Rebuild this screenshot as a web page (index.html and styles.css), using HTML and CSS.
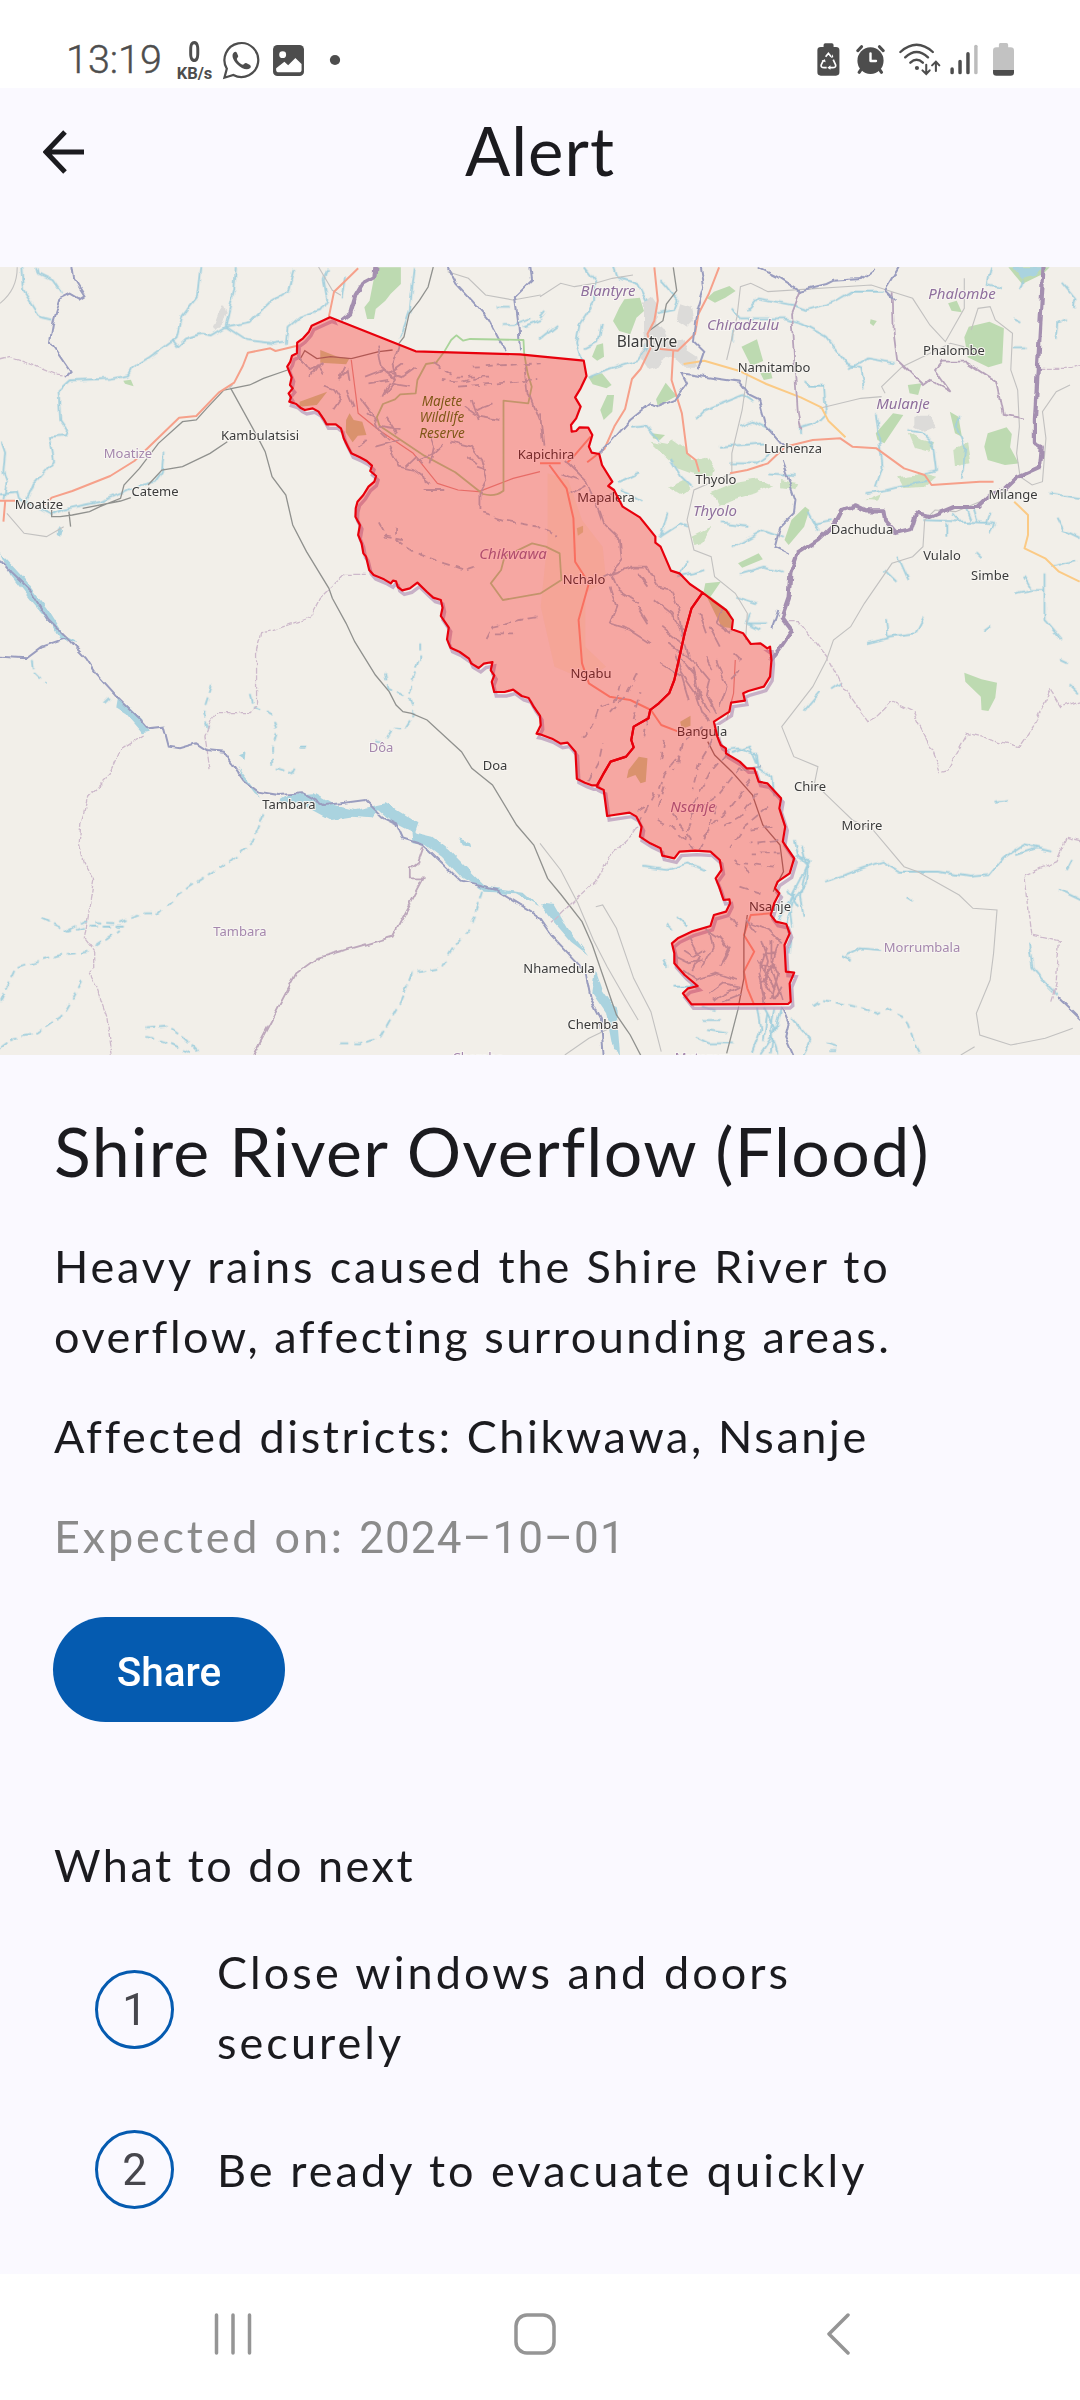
FILE: index.html
```html
<!DOCTYPE html>
<html lang="en">
<head>
<meta charset="utf-8">
<title>Alert</title>
<link rel="stylesheet" href="styles.css">
</head>
<body>
<div class="screen">
  <div class="status">
    <span class="time">13:19</span>
    <span class="speed"><b>0</b><small>KB/s</small></span>
    <svg class="whatsapp" viewBox="645 120 112 120" preserveAspectRatio="none"><path d="M652 233l7-27a49 51 0 1 1 19 19z" fill="none" stroke="#4d4d4d" stroke-width="6.5"/><path d="M680 157c-8 6-5 22 8 35 14 14 29 20 38 13 4-4 3-9-1-11l-10-5c-4-1-6 4-9 5-7-1-17-11-18-17 0-3 5-6 4-9l-4-10c-2-4-6-3-8-1z" fill="#4d4d4d"/></svg>
    <svg class="photo" viewBox="790 120 96 120" preserveAspectRatio="none"><rect x="793" y="135" width="90" height="93" rx="13" fill="#4d4d4d"/><circle cx="821" cy="164" r="10" fill="#fff"/><path d="M802 205l24-20 11 11 21-22 18 18v17q0 8-8 8h-58q-8 0-8-8z" fill="#fff"/></svg>
    <svg class="more" viewBox="955 120 35 120" preserveAspectRatio="none"><circle cx="972.500" cy="180" r="15" fill="#4d4d4d"/></svg>
    <span class="grow"></span>
    <svg class="recycle" viewBox="800 120 72 120" preserveAspectRatio="none"><path d="M822 141v-6q0-5 5-5h19q5 0 5 5v6h7q10 0 10 10v66q0 10-10 10h-44q-10 0-10-10v-66q0-10 10-10z" fill="#4d4d4d"/><path d="M828 170l8-10 8 10M850 179l7 16q2 8-9 8h-8M831 203h-7q-11 0-9-8l6-13" fill="none" stroke="#fff" stroke-width="5"/><path d="M843 174l7-2-1-9zM842 196v13l-9-6zM816 182l10-4 2 9z" fill="#fff"/></svg>
    <svg class="alarm" viewBox="915 120 90 120" preserveAspectRatio="none"><path d="M923 152l11-12M986 140l11 12M933 208l-6 9M986 208l6 9" stroke="#4d4d4d" stroke-width="9" stroke-linecap="round"/><ellipse cx="960" cy="182" rx="38" ry="40" fill="#4d4d4d"/><path d="M960 160v23h16" fill="none" stroke="#fff" stroke-width="7" stroke-linecap="round" stroke-linejoin="round"/></svg>
    <svg class="wifi" viewBox="1040 120 128 120" preserveAspectRatio="none"><g fill="none" stroke="#4d4d4d" stroke-width="7" stroke-linecap="round"><path d="M1047 156q47-43 94 0M1061 172q33-32 66 0M1076 188q18-17 36 0"/><path stroke-width="6" d="M1122 194v27m-11-10l11 11 10-11M1150 213v-27m-11 10l11-11 10 11"/></g><circle cx="1095" cy="204" r="6" fill="#4d4d4d"/></svg>
    <svg class="signal" viewBox="1188 120 87 120" preserveAspectRatio="none"><g stroke="#4d4d4d" stroke-width="10" stroke-linecap="round"><path d="M1197 207v11M1220 184v34M1243 161v57"/><path stroke="#bcbcbc" d="M1266 139v79"/></g></svg>
    <svg class="battery" viewBox="1312 120 66 120" preserveAspectRatio="none"><path d="M1332 142v-8q0-5 4-5h18q5 0 5 5v8h7q10 0 10 10v58h-61v-58q0-10 10-10z" fill="#c2c2c2"/><path d="M1315 210h61v8q0 9-10 9h-41q-10 0-10-9z" fill="#4d4d4d"/></svg>
  </div>

  <header class="appbar">
    <svg class="back" viewBox="0 0 42 44"><path d="M41 22H3M22 2L3 22l19 20" fill="none" stroke="#1b1b1f" stroke-width="5"/></svg>
    <h1>Alert</h1>
  </header>

  <svg class="map" viewBox="0 7 1080 788">
    <defs>
      <filter id="wiggle" x="-5%" y="-5%" width="110%" height="110%"><feTurbulence type="fractalNoise" baseFrequency=".035" numOctaves="1" seed="4"/><feDisplacementMap in="SourceGraphic" scale="20" xChannelSelector="R" yChannelSelector="G"/></filter>
      <clipPath id="frontier"><path d="M790 150h170l190 410v340l250 50 300 450 45 190 255-90 60-250 140-80h200v1130H790z"/></clipPath>
      <path id="chikwawa" d="M958 172l-23 11-30 14-8 18-17 20-17 13-1 32-14 7-5 18-9 15 8 20 5 12-5 23 8 10-12 15 7 12-5 13 20 7 12 11 13 7 23-5 17 10 15 23 8 15h27l15 12 8 30 12 25 10 20 25 12 20 11 15 14-5 16 17 15-5 17-17 15-15 25-17 20-5 20-1 25 13 25-5 30 10 25 5 30 8 10 9 40 13 15 30 13 20 12 6-8 9 2 5 17 13 10 22-6 22-17 28 28 18 17 22 7 5 23-5 25 23 35-5 35 10 25 27 13 27 20 6 14 22 14 15-13 25-5-5 25 10 15-7 20 7 30h30l25-7 25 19 20 6 15 27 18 27 2 28-12 25 10 2 35 13 25 15 20-3 23 28 4 80 23 12 20 8h15L1753 1540l20-35 45-15 22-28-7-22 7-40 43-25 5-25 25-20 30-30 15-40 13-60 17-80 20-75 32-47-37-26-30-32-25-8-30-72-15-12v-18l-45-58-50-32-25-50-17-12 12-13-30-50-8-33-22-4-8-18 10-35-12-22-25-1-10 11-13 2-2-20 15-20 13-35-16-28 16-27 17-37-8-46-127-13-58-6-303-9z"/>
      <path id="nsanje" d="M2040 998l28 22 40 30 20 30-3 28 33 12 22 32 28-2 20 15 8-5 4 40-4 50-18 30-45 13-15 7 5 22-40 6-5 27-45 30 10 45 10 25 15 10v15l40 25 20 20 22 0 13 40 25 5 40 45-5 30 17 55-7 45 33 50-13 45-35 25-8 20 13 15-15 30-10 35 15 20 30 7 10 28-15 35 4 80 24 3-13 32 3 55-8 7-280 1-25-33 15-15 28-7-38-33-30-35v-30l-7-30 17-15 40-20 55-17 10-33 35-10 12-25-2-12-17 2-13-40-10-25 17-25-5-30-27-25-45-3-45 3-15 20-35-8-5-22-30-15-30-20 5-30-15-30-20-12-65 10-10-78-20-10 20-40 20-35 45-15 22-28-7-22 7-40 43-25 5-25 25-20 30-30 15-40 13-60 17-80 20-75z"/>
    </defs>
    <rect y="7" width="1080" height="788" fill="#f2efe9"/>
    <g transform="scale(.34439 .33333)">
      <g class="wood">
        <path d="M1092 22h72v50l-30 30-15 20-28 25-5 30h-20l-8-35 15-20zM358 362l22-3 8 20-25-8z"/>
        <g transform="translate(1568)">
          <path d="M245 118l45-5 12 40-22 20-18 50-32-10-18-30 18-40zM485 115l20-20 45-17 18 15-30 20-30 15zM165 255l18-5 3 40-20 12-15-12zM140 350l40-10 28 35-15 10-40-12zM195 405h20l-5 50-25 25-10-30zM365 368l32 40-55 30-5-20zM585 260l45-22 18 65-35 15zM640 340l30-5 5 20-25 5zM1245 200l60-15 42 20-5 105-40 12-60-30-10-60zM1300 520l55-18 15 20-5 40 25 48-40 5-50-15-10-40zM975 520l50-60 30 5-55 85-20-10zM1068 375l40-5-10 35-25-5zM1190 455l25 15 10 60-20-10zM770 740l12 10-15 50-45 55-12-15 20-60zM575 910l60-30 12 18-60 25zM480 970l45-5-30 45-20-15zM1360 22h120l-20 20-60 30-20-25zM1185 130l25-8 15 35-30-5zM960 178l18 5-10 15-10-8zM325 520l38 5-15 15-20-5zM1232 1238l50 20 45 10-5 45-20 40-20-3-2-40-45-45z"/>
          <g opacity=".7" filter="url(#wiggle)"><path d="M318 545l55 10 10-20 40 30 20 35 40-10 25 35-10 30-60-15-40-15zM370 680l50-25 20 30-30 20zM490 700l80-35 60-10 45 20-50 25-70 20-35 15-10-20zM700 660l50 10-10 20-40-5zM440 830l60-30-30 50-25 5zM1070 515l40 25 35 10-15 25-40-10zM1200 570l40-20 10 60-45 10zM1040 655l80-12 30 8-35 30-60 3zM945 720l45-20-10 22z"/></g>
        </g>
        <g class="crop"><path d="M930 270l50 20 35 5-10 18-75-5zM870 425l40-15 40-15-30 40-50 5zM1005 480l10-20 12 20 25 5 12 40-25 2-15 20-20-30zM2045 995l75 60 5 50-30-5zM1825 1530l30-40 25 5-5 70-15 5-15-25-25 10zM1975 1385l30-18v30l-25 10zM1675 805l18-8v20l-15 10z"/></g>
        <path class="farm" d="M1590 640l60 20 40 120 60 80 10 100-60 40 0 160 60 60-60 40-90-40-40-180 20-200z"/>
      </g>
      <g class="town" filter="url(#wiggle)"><path d="M650 135l8 20-10 35-20 20-10-5 15-40zM1870 125l20-15 20 30-5 50 20 20 20 40 40-10 10 30 30 20 0 30-40 0-20-20-30-10-20 30-30 10-20-30-10-20 20-30-5-40zM2655 470l45 0 20 30-35 15-30-15zM1975 130l30 10 10 40-20 20-30-20z"/></g>

      <g class="river" filter="url(#wiggle)">
        <path d="M62 21l5 70 50 80 35 8M108 21l5 20 40 20 28 42M582 21l-10 90-45 60-15 65-75 55-55 35-10 20-50 10-120 5-32 30 5 90 20 30-5 15-45 5 12 70-25 30-35 40-25 65M685 21l-5 70-10 40-15 70-40 25-30-5-45 15-25 25-15-20M655 200l70-15 60-60 55-35 15-60M655 200l60 40 80 10 30-5M830 255l5-55 35-30 60-20 20-30-10-60 10-30M1205 21l-10 80-5 50-20 60-10 25M1002 50l-10 65M170 815l5-15M475 575l-5 60-20 30-60 15-40 20-60 25-110 25-30 15-95-50-5-20-50 5M5 545l10 30-5 60 10 30-10 50M1460 195h30l50-20M1568 180l-50 20M1480 140l-35 0"/>
        <g transform="translate(1568)">
          <path d="M0 235l50-40M0 175l15-20M130 22l30 40 0 60-45 70-10 60 15 50M215 22l10 30 60 20 25 50M350 60l50 60-10 30-50 10M180 190l-10 55-40 20M145 350l60-25 80-25 30-50M605 150l30-35 100 20 40 15 80-25 50-30 90 0M560 250l5-50M560 145l20 30 130 0 50 15 70 40 60 80 40 15 10 60M900 325l50-30 80 15M765 360l20 20 40 0 5 80-30 30-45 15 0 20M450 480l30-30 50-20 60-25 30 20M580 500l40-15 50 25M520 560l130-10M550 610l80 0 50-35M660 640l80 5M265 500l40-5 40 50M380 600l30 50 30 30M225 670l60-30M235 690l60 35M350 830l20-70M345 830l60-40 25 10M560 860l90-50 55 20M525 790l80 10M580 940l70-20 55 15M430 900l-30 50 80-20M610 1060l-10 30 40 20M570 1010l60 20M600 1090l60 0M945 700l60-10 60-15 60-10M975 680l20-60-20-160M1120 640l30-10-10-80-30-30-40-10M1225 655l10-90-25-60 5-40M1310 22l-10 50 40 10M1400 60l-10 30M1515 65l40 50-5 30M1530 180l-25 10-5 50M1375 175l20 10M1370 265l40 0M780 755l30 60M800 790l50-10M1110 780l130 5 80 5M1180 830l0-40M1215 780l-15-20M1250 780l-15-40M1270 785l-10-35M1295 790l10-35M1320 790l-15 30M1480 700l90 15M1500 770l20 40 50 25M1380 1000l45-10 40 0 0 90 50 60M1465 990v-50M1425 985l-20-35M1485 920l70-20M950 1150l60-15-5-60M1010 1130l80-10 25-50M1290 1115l20-15M1000 930l35 35M1070 960l-30-70M1265 880l15 15M845 1285l30-20M765 1355l50-60M1535 1270l30 30M1510 1200l20 10M1320 1625l40-5M825 1865l60-20 50-20 60-20 50 30 110 0 90 15 60-5 40-50 60-40 80 20M1380 1785l60-20M890 2085l40-20 60 5M905 2100l-30-15M1420 2045l10 80 50 60 20 20M1510 1890l60 30M1530 1830l15-30M1065 1910l15 10"/>
          <path d="M540 1470l40-5 50 20 5 40 40 30 5 50M560 1480l50-20 20 50M740 1740l10 50 30 30-5 50-40 50-20 70 15 50-5 40M740 1790l40 10-25 60-30 60 10 80M760 1760l15 60-20 90 10 60M750 1940l-30-50M690 1980l50-80M300 1820l70 10 60-20 50 20M365 1990l20 20M395 1970l30 30M385 2180h60M360 2100l10 20M470 2240l40 10M475 2280l50 0M450 2330l40 20 70 0M485 2310l60 10M630 2240l10 70-25 70M650 2240l30 60-10 80M680 2250l-10 60 20 70M700 2240l-20 80-40 60M660 2260l-10 80M735 2280l50 60-20 50M830 2350l30 10M840 2370l20 0"/>
          <path class="dash" d="M790 2240l30-20 100 20 60 20 30-15 50 30 30 80 15 30"/>
        </g>
        <path class="dash" d="M1220 1150v50M1115 1240l10 50 60 20M1215 1200l-20 60-5 60 15 40-30 50-35-5-25 40-40-5M725 1305l10 35 55 25 15 50-15 50 0 55 60 20 10-20M870 1460l20 0M615 1275l-25 80 15 60M95 1200l5 40 30 30M765 1660l-30 80-60 60-65 40-90 60-60 60-40 0-80 30-90-5-50 25M120 1975l80 40 60-15 100 0M275 2060l70-50M0 2225l45-100 130-40 85-10M0 2365l40-30 70-15 70-50 35-60 30-60M425 2305l60-5 45 30 50 50M425 2330l50 15 90 40M1400 1895l-35 110-50 60-35 60-85 15-30 80-60 110-60 20-60 0M300 1330l20-20"/>
      </g>

      <g class="water" filter="url(#wiggle)">
        <path d="M0 880l20 20 45 50 75 100 45 75 40 20-50-5-30-50-50-60-65-85zM340 1310l40 35 30 30 25 40-20 5-50-60-30-20zM690 1520l30 40 35 50-15-10-35-45zM840 1605l70-5 60 35 60 15 90-20 40 25 55 35-10 30-65-35-40-35-20 25-60-5-60 10-90-50-60-5zM1195 1715l60 15 50 40 65 70 40 40 110 15 48 45-70-40-90-5-70-45-55-60-45-35-40-5zM693 1485l20-8-3 20zM1330 1735l35 12 3 15-30-15z"/>
        <path d="M1568 1930l40 5 40 70 60 80-50-40-50-60zM1730 2130l20 60 40 60 10 130-20-10-20-110-40-60zM165 805l15 5-5 20-10-5z" />
        <path d="M2938 22h90l-20 25-40 10z"/>
      </g>

      <g class="fine">
        <path class="rail" d="M835 330l-70 25-40 20-75 15-50 55-30 35-40 5-70 65-55 75-45 50-10 40-60 25-30 15-50 10-35 5-25 0 0-25M200 755l5 45M240 745l110-22 30-10M430 675l40-45 60-10 80-40 50-35"/>
        <path class="rail" d="M670 385l80 150 20 40 20 75 40 55 20 90 40 80 65 110 10 30 40 75 25 55 30 50 30 50 40 50 20 40 20 20 25 5 45 20 100 95 30 50 60 50 70 120 50 60 40 100 40 50 60 80 30 70 40 120 30 90 40 60 60 120M1258 21l-15 60-25 40-30 40-15 70-15 20M2145 2240l-35 140M1955 22l10 70-30 40-10 50-40 30"/>
        <path class="road" d="M0 130q50-40 50-108M20 760l50 60 65 10 50-30M665 385l10-10M1300 35l60 20 50 50 80 15 80-15M925 21l40 70 25 15M1568 110l60-40 40 10 60-10 50-15 60-10M1568 1750l60 80 50 100 45 110 40 80 50 90 40 70M1730 1940l20-5 40 70 50 150 50 100 30 120M2110 300l30-130 10-90 30-10 50 25 300-20 60 20 60 20 50 80 45 50 55-100 0-90M2820 210l20-65 35-5 15 40 50 40-5 110 20 60 5 110-8 80 10 70 35 25 30-10 10-130-10-80 40-60 40-20M2570 400l-10-20 60-60 60-30 80-40 40 10M2560 410l-60 5-120 30M2170 340l-15 110-30 130 0 60-110 50-20 90 20 90 50 20 10 60 60 50 35 60-5 80M2400 1200l-40 80-90 120 35 90 70 30-10 50 60 60 50 50 60 30 90 110 40 15 120 70 40 40 70 5-10 130-10 80-40 100 10 65 90 30 100-20 80-30M2830 2360l-40 25M1640 2385l70-50 60-30M2400 1200l20-60 50-40 40-70 80-120 60-20 30-30 5-80 30-30 60 5 70-30"/>
      </g>

      <g class="trunk">
        <path d="M1040 25l-40 40-30 30-15 75M860 258l-60 15-15-8-65 13-15 40-25 50-45 30-65 70-50 5-60 60-70 70-70 45-110 45-60 20-20 20M45 722H0M15 725l-5 60M1900 22l10 100-10 60-20 40 10 40-30 65-25 30-20 90-30 50-30 70-50 40M2088 22l-30 80-30 60-10 60-50 50-50-5-10-5M1955 270l-5 90 30 100 15 120 25 20 10 35M2120 640l50-10 60-20 50-50 80-20 80-5 35 25 70 5 80 60 60 20 20 30 140-10 40 0M1568 610l60 0M1595 615l50 70 20 90 5 130 40 65-30 110 10 130 20 60 60 40 60 10 60 30 30 45 50 20M2240 1960l-60 5-20 60 30 50-30 60 10 50 20 50M1645 610l20-20 50-60"/>
        <path class="pale" d="M1020 300l20 160 60 50 100 70 70 90 60 20 60 5 100-40 78-20M2135 1200l-5 100-20 80"/>
        <path class="primary" d="M1985 312l60-10 100 30 80 40 100 40 60 30 20 40 50 50M2945 725l40 40 0 60-10 40 60 30 40 40 60 30"/>
      </g>
      <path class="road dark" d="M2055 1445l20 40 50 50 60 70 30 90 50 60 10 80-30 60M2170 1965l-10 70 0 120-15 80M870 300l15-28 35 24 40-6 60 6 80-21 40-5"/>

      <g class="admin" filter="url(#wiggle)">
        <path class="dashy" d="M0 300l30-8 70 25 60 25 40 5M1065 943h-65l-30 30-40 40-30 60-60 20-50 20-30 5-15 50 0 170-15 20-100 0-15 20-20 50 15 100M420 1425l-70 45-35 80-60 60-20 80-5 60 15 60 30 50-30 175 30 40v50l-15 15 20 40 30 90 15 110-10 40M1850 1700l-20 30-60 60-30 60-60 60-60 60-20 20M3015 325h100l50-20M2290 1085l30 0 90 120 40 80 70 100 20-10 50-50 60 30 60 120 20 60 20-5 60-110 150 40 40-60 50-110 30 50 100-30M3136 1745l-40-10-30 70-90 40 20 180 80 20-10 130-15 50"/>
        <path d="M1230 1760l-15 45-25 20 0 30h40l-90 175-220 65-60 45-125 245" stroke="#bda8bc"/>
        <path d="M2322 90l-25 70 5 80 15 220 10 50M2592 100l3 120 10 80 60 60 15 15 20-15 60 35-45-65 20-25h70l90 60 20 100 55 10"/>
      </g>
      <g class="blue" filter="url(#wiggle)">
        <path d="M210 21l5 35 30 50-15 10-25-15-30 15-20 70-10 60 60 90-15 15M0 900l30 35 60 60 50 85 50 50 60 65 25 40 70 80 60 60 25 30 45-5 15 60 30 5 50-15 30 20 50 5 60 90 40 30 60 10 70-5 60 35 50-5 70-10 50 50 40 20 20 45 60 20 110 110 100 25 80 50 40 25 40 60 100 110 15 80 30 60 10 150M0 1190l75 5 45-35 70-25M1300 21l25 50 45 50 50 60 30 60 25 35M1540 21l5 40-50 50 10 80 5 80M1740 580l30-30 60-70 60-50 20 10 50-20 35-50-15-30 65 10 100 15 30 40 30 15 20 80 50 60"/>
        <path d="M2035 22l10 60-20 70-10 90 30 30-20 60M2270 600l40 120-5 40-40 40-15 60 40 20M2200 22l60 30 60 40 80-20 20-10 80-5 40-30M2610 22l-40 70 30 30M2270 2240l20 50-10 40 25 60M2240 1110l20-60M3070 2210l70 70"/>
      </g>
      <g filter="url(#wiggle)">
        <path class="country" d="M3030 21l-25 460v70l20 10-5 60-65 30-40 40-40 15-35 35-70 0-70 30-40-10-15 50-40 10-35-40-5-30-50 0-30-15-40 15-20 40-50 50-60 40-20 60-5 70-20 60 30 40-40 60-25 30"/>
        <path class="country" d="M1090 21l-3 30-35 20-20 35-15 55-25 20"/>
      </g>
      <g class="edge" clip-path="url(#frontier)"><g transform="translate(6 12)"><use href="#chikwawa"/><use href="#nsanje"/></g></g>

      <g class="park">
        <path d="M1290 275l20-35 15-14 20 16 20-5 155 3 2 40 10 60 12 40-10 50-72-8v270q-25 20-60 10l-80-65-90-50-130-90-8-25 18-40 35-14 15-15 45-3 5-40 25-48 30-5zM1465 890l-10 40-30 40 35 50 110-20 60-40-5-80-40-20-40-10z"/>
      </g>

      <g class="river inner" filter="url(#wiggle)">
        <path d="M870 290l30 40 40-20M880 310l-15-20M900 350l20-30 15 20M980 360l30-30 5 30M1000 320l-20 40M1095 260l10 60 45 40-30 40M1160 250l-20 60 10 50M1060 350l50-20 60 20 40-30M1070 370l60-10M1110 410l20-40 60 10M1130 340l40-30M940 380l30 10 20 30-20 30M1010 390l20 50M1050 420l30 40 20 50 30 30M1095 480l-30-20M1150 520l-30-50M1100 500l60 10M1065 540l-30 20M1090 560l70-20M1130 560l30 60 40 10 50 40M1180 620l30-30 20 20M1245 520l15 40-10 50M1290 550l-30 30-50 20M1310 545l60 15 30 40 15 60-20 40 0 50M1385 610l-25-20M1415 630l-30-10M1230 690l60 0M1350 440l40 30 60 10M1370 420l20 60M1380 450l50-20M1525 320l10 80 30 80M1568 460l10 100M1640 600l60 60 30 70 20 60 50 50 5 60-30 40 20 50 60 40M1630 640l50 20M1660 700l40-20M1720 730l60-30M1830 920l50 0 30 60 40 10 20 60 10 80M1740 960l40-20 60-20M1770 980l20 60-20 50 60 20 60 40M1880 980l-30-40M1900 1020l50 40 30 60M1850 1040l30 50M1920 1100l60 50M1960 1180l20 60 40 60 20 60 20 20M1980 1200l40 50 10 70M2010 1220l20 80 30 60M1940 1150l80 60 40 50-10 40 30 60M1920 1210l60 40 20 70M2100 1040l-20 50 40 30M2060 1100l30 60M2030 1060l20 60M2080 1200l30 80-20 60M2050 1190l20 40M2150 1230l-30 30M2130 1180l20 20M1990 1150l10 40"/>
        <path class="dash" d="M1260 310l60 40 100 0-80 15-60-5M1370 320l200-10M1330 380l230-20M1400 760l60 20 100 20 60 30M1100 790l20 40 50 10M1150 800l0 40 60 40 80 30 60 20 30-10M1410 1140l20-40 80-20 60-10M1440 1120l50 0M1800 1270l-10 50-50 20-20 60-30 30M1850 1240l-30 60-50 60M1880 1370l-10 70M1840 1380l20-80M1710 1560l30-60 10-50M2040 1400l-60 50-20 80M2070 1440l-40 70-20 80M2110 1480l-50 60-50 100M2150 1520l-60 80-80 60-20 80M2180 1560l-60 80-80 90M2200 1600l-50 70-50 30M2230 1640l-70 60-40 60M2240 1700l-70 10M2260 1740l-80 10M2270 1780l-90 0M2250 1820l-90-10M1960 1500l-30 40-20 70M1930 1580l-20 70M1900 1600l-40 80M1910 1680l40 20 40 40 30 40M1950 1660l60 80M1870 1640l-30 20M2080 1640l-20 60-30 70M2130 1800l50 40M2150 1880l60 20M1980 1450l-10 60M2210 1520l-60 10M1930 1440l-10 60"/>
        <path d="M1985 2070l30 20 30-20M2000 2030l30 60-20 40M1960 2090l40 20 40-10M2060 2010l10 50-30 60M2090 2030l30 40-20 40M2120 2060l-30 60M2040 2000l60 40M2140 2000l-20-30M2020 2160l60-20 60 20M2060 2200l40-30 50 10M2070 2220l80-40M2100 2225l50-20M2210 2040l20 60-10 60 30 60M2225 2060l-20 80 20 80M2240 2040l0 60 20 40-20 80M2260 2050l-20 70 30 100M2250 2110l-40 60 10 60M2200 2100l50 90M2270 2180l-20 40M2180 1990l50 20 40 40M1985 2130l40 30M2195 2020l-30-40M2215 2080l40 0M2205 2120l50 0"/>
      </g>
    </g>

    <g class="place" text-anchor="middle" transform="translate(0 -260)">
      <text x="260" y="440">Kambulatsisi</text><text x="155" y="496">Cateme</text><text x="39" y="509">Moatize</text>
      <text x="647" y="347" class="city">Blantyre</text><text x="774" y="372">Namitambo</text><text x="954" y="355">Phalombe</text><text x="793" y="453">Luchenza</text>
      <text x="716" y="484">Thyolo</text><text x="1013" y="499">Milange</text><text x="862" y="534">Dachudua</text><text x="942" y="560">Vulalo</text><text x="990" y="580">Simbe</text>
      <text x="546" y="459">Kapichira</text><text x="606" y="502">Mapalera</text><text x="584" y="584">Nchalo</text><text x="591" y="678">Ngabu</text><text x="702" y="736">Bangula</text><text x="770" y="911">Nsanje</text>
      <text x="495" y="770">Doa</text><text x="289" y="809">Tambara</text><text x="810" y="791">Chire</text><text x="862" y="830">Morire</text><text x="559" y="973">Nhamedula</text><text x="593" y="1029">Chemba</text>
      <g class="area"><text x="128" y="458">Moatize</text><text x="381" y="752">Dôa</text><text x="240" y="936">Tambara</text><text x="922" y="952">Morrumbala</text><text x="478" y="1062">Chemba</text><text x="703" y="1062">Mutarara</text></g>
      <g class="district"><text x="608" y="296">Blantyre</text><text x="743" y="330">Chiradzulu</text><text x="962" y="299">Phalombe</text><text x="903" y="409">Mulanje</text><text x="715" y="516">Thyolo</text><text x="513" y="559">Chikwawa</text><text x="693" y="812">Nsanje</text></g>
      <g class="reserve"><text x="442" y="406">Majete</text><text x="442" y="422">Wildlife</text><text x="442" y="438">Reserve</text></g>
    </g>

    <g class="alert-area" transform="scale(.34439 .33333)"><use href="#chikwawa"/><use href="#nsanje"/></g>
  </svg>

  <main class="content">
    <h2>Shire River Overflow (Flood)</h2>
    <p class="desc"><span class="wide">Heavy rains caused the Shire River to</span><br>overflow, affecting surrounding areas.</p>
    <p class="districts">Affected districts: Chikwawa, Nsanje</p>
    <p class="expected">Expected on: <span class="date">2024&#8211;10&#8211;01</span></p>
    <button class="share">Share</button>
    <h3>What to do next</h3>
    <ol class="steps">
      <li><span class="num">1</span><span>Close windows and doors<br>securely</span></li>
      <li><span class="num">2</span><span>Be ready to evacuate quickly</span></li>
    </ol>
  </main>

  <nav class="navbar">
    <svg class="recents" viewBox="0 0 38 42"><path d="M2.500 2v38M19 2v38M35.500 2v38" stroke="#959595" stroke-width="3.500" stroke-linecap="round"/></svg>
    <svg class="home" viewBox="0 0 42 42"><rect x="2" y="2" width="38" height="38" rx="11" fill="none" stroke="#959595" stroke-width="3.500"/></svg>
    <svg class="prev" viewBox="0 0 24 42"><path d="M22 2L3 21l19 19" fill="none" stroke="#959595" stroke-width="3.500" stroke-linecap="round" stroke-linejoin="round"/></svg>
  </nav>
</div>
</body>
</html>
```
FILE: styles.css
```css
* { box-sizing: border-box; margin: 0; padding: 0; }
body { background: #faf9ff; }
.screen { width: 1080px; height: 2400px; display: flex; flex-direction: column; overflow: hidden; background: #faf9ff; color: #1b1b1f; font-family: Lato, "Open Sans", sans-serif; }

.status { height: 88px; background: #fff; display: flex; align-items: flex-start; padding: 40px 65.500px 0 66px; color: #4d4d4d; font-family: Roboto, sans-serif; flex: none; }
.status svg { height: 40px; flex: none; display: block; }
.time { width: 111px; font-size: 39.500px; line-height: 40px; font-weight: 300; -webkit-text-stroke: .4px #4d4d4d; white-space: nowrap; }
.speed { width: 35px; display: flex; flex-direction: column; align-items: center; }
.speed b { font-size: 29px; line-height: 24px; font-weight: 700; transform: scaleX(.72); }
.speed small { font-size: 16.500px; line-height: 16px; font-weight: 700; margin-top: 2px; }
.whatsapp { width: 38.600px; margin-left: 10px; }
.photo { width: 33px; margin-left: 11.300px; }
.more { width: 12px; margin-left: 23.900px; }
.grow { flex: 1; }
.recycle { width: 24.800px; }
.alarm { width: 31px; margin-left: 14.800px; }
.wifi { width: 44.100px; margin-left: 12px; }
.signal { width: 30px; margin-left: 6.900px; }
.battery { width: 22.700px; margin-left: 12.700px; }

.appbar { height: 179px; flex: none; display: grid; grid-template-columns: 120px 1fr 120px; padding-top: 22px; align-items: start; }
.back { width: 42px; height: 44px; margin: 19.500px 0 0 43px; }
.appbar h1 { font-size: 67px; line-height: 80px; font-weight: 400; text-align: center; letter-spacing: 1px; }

.map { display: block; width: 1080px; height: 788px; flex: none; }
.map path { vector-effect: non-scaling-stroke; }
.wood { fill: #bddab1; }
.wood .crop { fill: #bfc98a; opacity: .8; }
.wood .farm { fill: #f0e6b4; opacity: .3; }
.town { fill: #dcdbd9; }
.water { fill: #aad3df; }
.river { fill: none; stroke: #a2cfdd; stroke-width: 1.800; }
.river .dash { stroke-dasharray: 8 5; }
.river.inner { stroke: #a9bccc; }
.fine, .dark { fill: none; }
.rail { stroke: #90918e; stroke-width: 1.300; }
.road { stroke: #c2c1c0; stroke-width: 1.100; }
.dark { stroke: #8f7f78; stroke-width: 1.300; }
.trunk { fill: none; stroke: #f6a08a; stroke-width: 2; stroke-linejoin: round; }
.trunk .pale { stroke: #dd9a92; stroke-width: 1.200; }
.trunk .primary { stroke: #fbca85; }
.admin { fill: none; stroke: #b7a3bb; stroke-width: 1.800; }
.dashy { stroke: #cdb9cb; stroke-width: 1.300; stroke-dasharray: 6 1.500; }
.blue { fill: none; stroke: #9a9dbf; stroke-width: 2; }
.country { fill: none; stroke: #a48fb0; stroke-width: 4.200; stroke-linejoin: round; }
.edge { fill: none; stroke: #b596b8; stroke-width: 3.400; opacity: .7; }
.park { fill: none; stroke: #a9d49a; stroke-width: 1.800; stroke-linejoin: round; }
.alert-area { fill: rgba(255, 0, 0, .3); stroke: #e8000c; stroke-width: 2.200; stroke-linejoin: round; }
.map text { font-family: "Noto Sans", sans-serif; font-size: 13px; fill: #3b3b3b; stroke: #f7f5f1; stroke-width: 2px; paint-order: stroke; }
.map .city { font-size: 15.500px; }
.map .area text { fill: #a587ad; }
.map .district text { font-size: 15px; font-style: italic; fill: #8f6f9d; }
.map .reserve text { font-size: 13.500px; font-style: italic; fill: #487c20; stroke-opacity: .3; }

.content { flex: 1; padding: 56px 53px 0 54px; }
h2 { font-size: 68px; line-height: 80px; font-weight: 400; letter-spacing: 1.350px; white-space: nowrap; }
.desc, .districts, .expected, h3, .steps { font-size: 45px; line-height: 70px; font-weight: 400; letter-spacing: 2.500px; white-space: nowrap; }
.desc { margin-top: 40px; }
.wide { letter-spacing: 2.850px; }
.districts { margin-top: 30px; letter-spacing: 2.600px; }
.expected { height: 70px; margin-top: 30px; color: #8b8b8b; letter-spacing: 2.800px; }
.date { font-family: Roboto, sans-serif; font-size: 44px; letter-spacing: 1.100px; }
.share { display: block; width: 232px; height: 105px; margin: 46px 0 0 -1px; padding-top: 4px; border: 0; border-radius: 53px; background: #055bb0; color: #fff; font: 500 40.500px Roboto, sans-serif; }
h3 { margin-top: 108px; }
.steps { list-style: none; padding-left: 41px; margin-top: 37px; display: grid; gap: 53px; letter-spacing: 3.050px; }
.steps li { display: flex; align-items: center; gap: 43px; }
.num { width: 79px; height: 79px; flex: none; border: 3px solid #055bb0; border-radius: 50%; display: grid; place-items: center; color: #47474d; font-family: Roboto, sans-serif; font-size: 44px; letter-spacing: 0; line-height: 75px; }
.steps li:first-child .num { margin-top: 5px; }

.navbar { height: 126px; flex: none; background: #fff; display: flex; align-items: flex-start; padding: 39px 0 0 214px; }
.navbar svg { height: 42px; }
.recents { width: 38px; }
.home { width: 42px; margin-left: 262px; }
.prev { width: 24px; margin-left: 270px; }
```
